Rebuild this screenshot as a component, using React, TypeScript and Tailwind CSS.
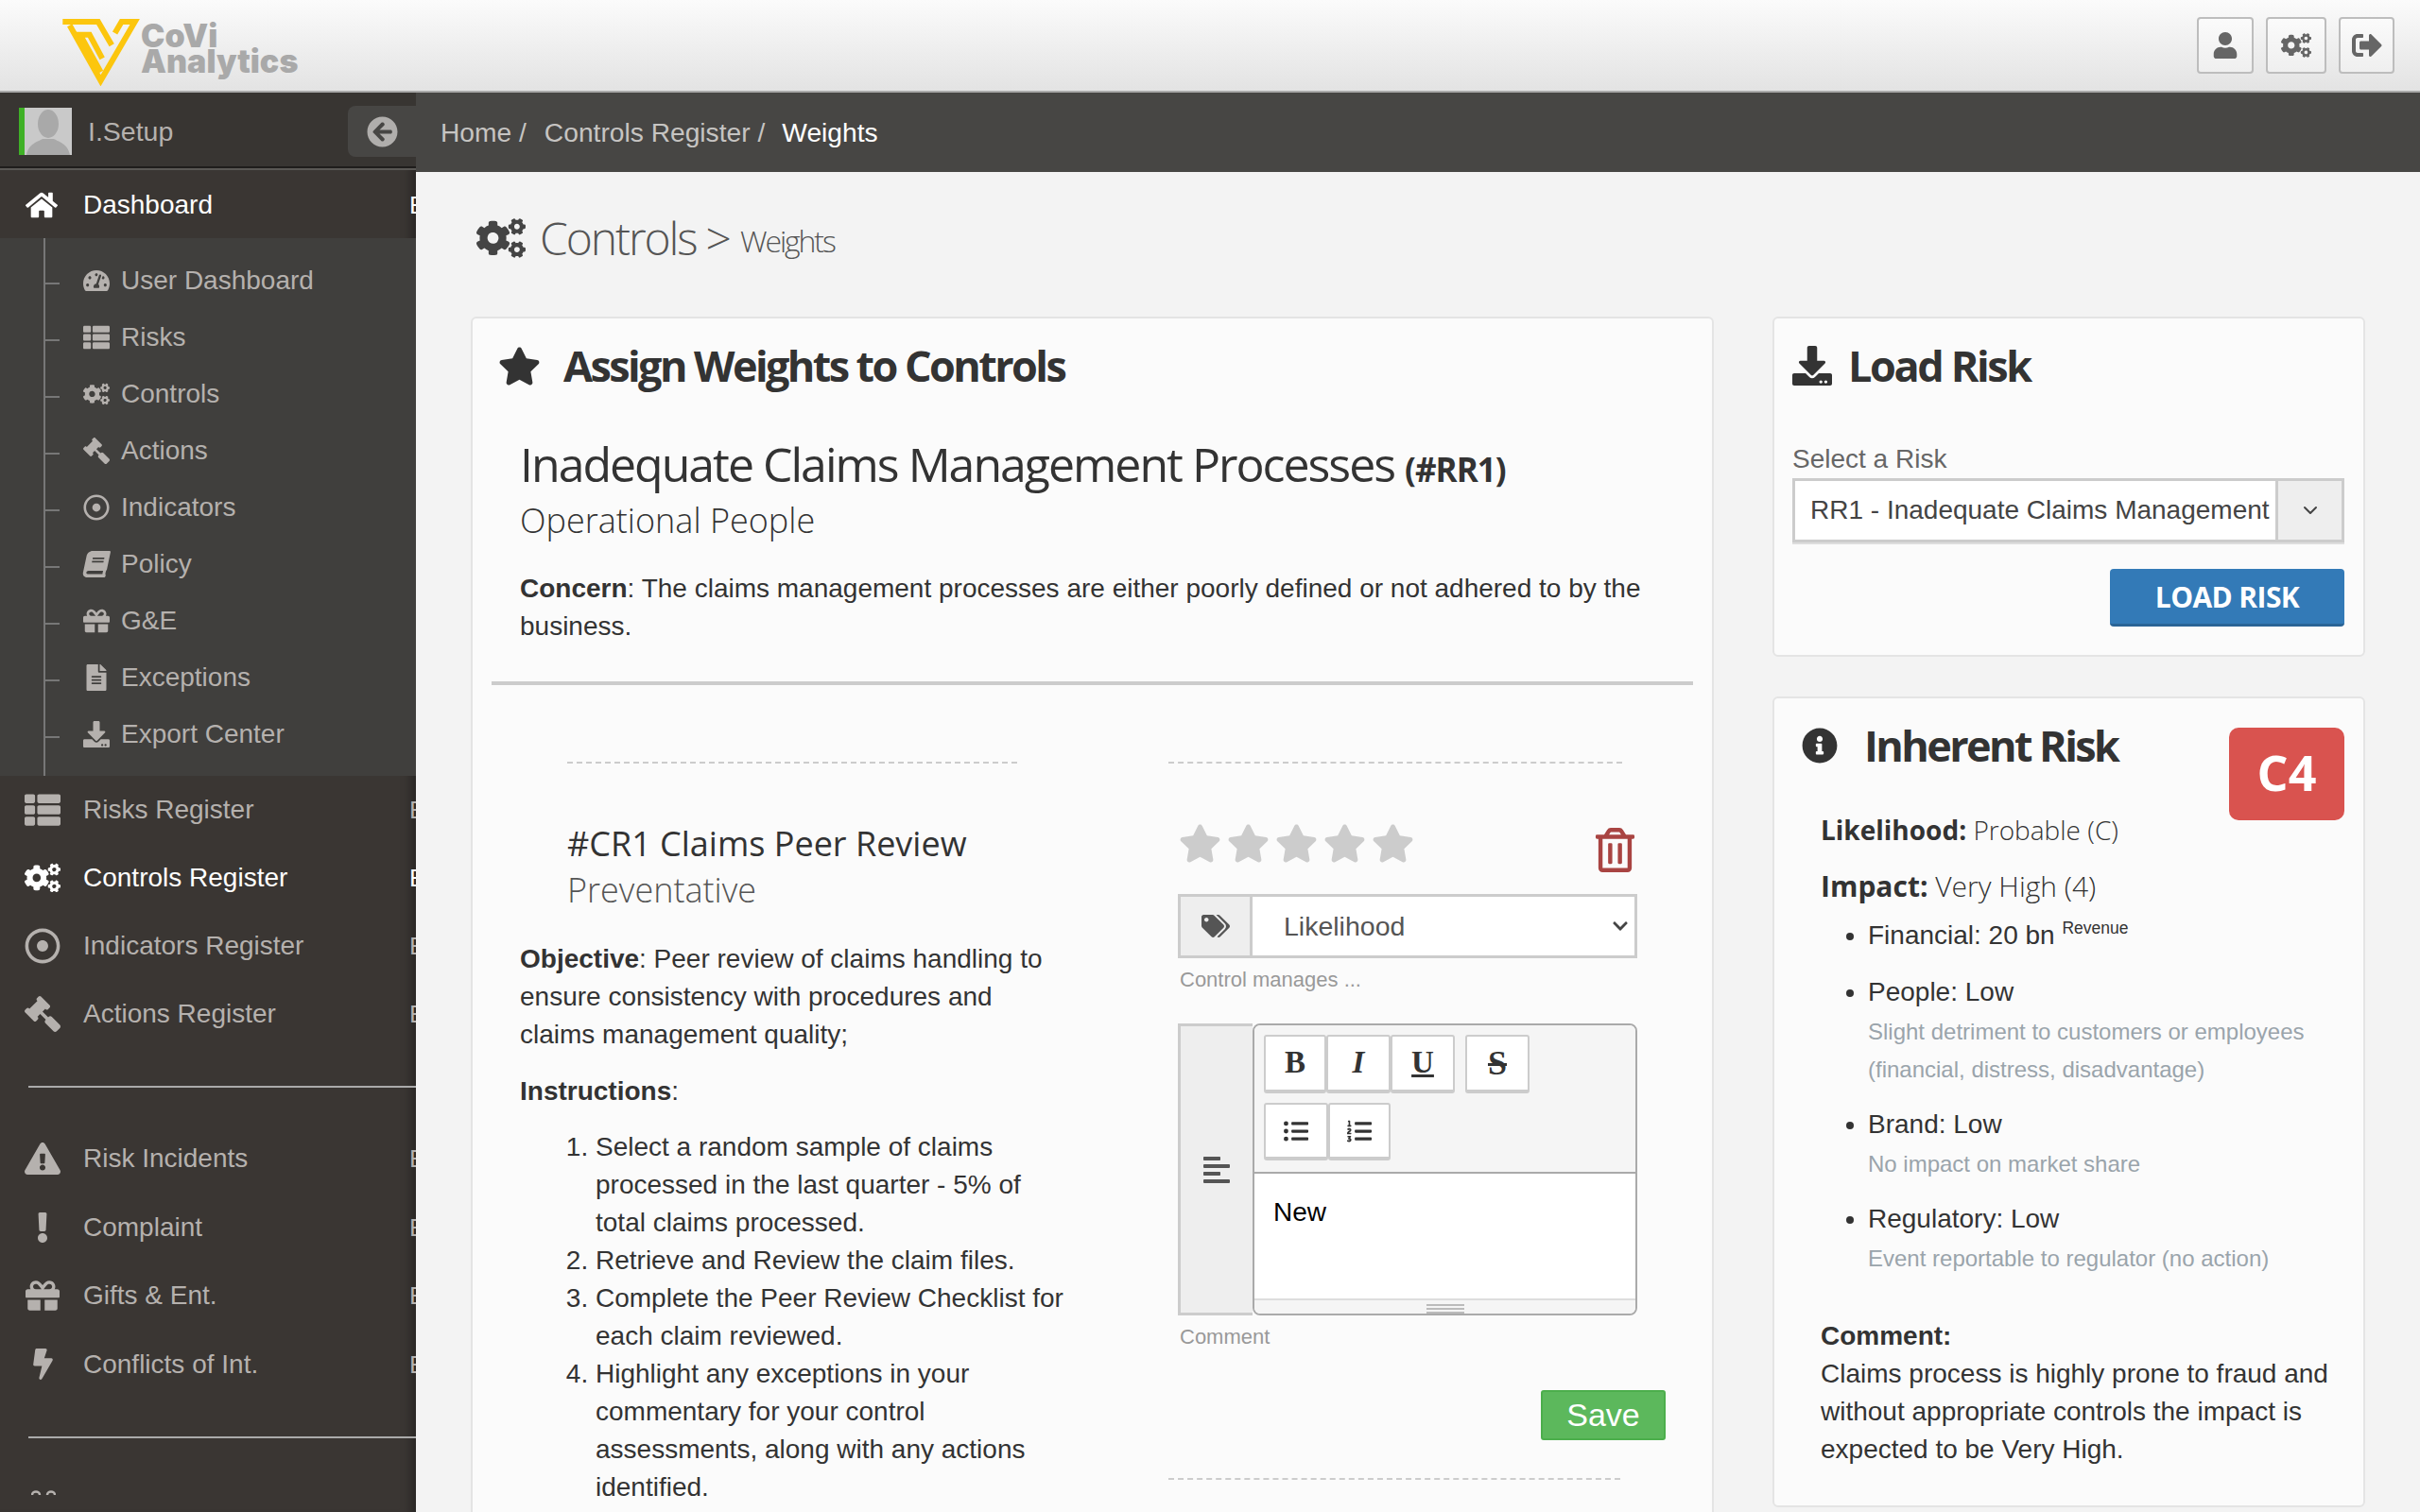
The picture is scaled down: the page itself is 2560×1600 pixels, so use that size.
import React from "react";
import { ChevronDown } from "lucide-react";
import {
  FaAlignLeft,
  FaArrowCircleLeft,
  FaBolt,
  FaBook,
  FaChevronDown,
  FaCogs,
  FaDownload,
  FaExclamation,
  FaExclamationTriangle,
  FaFileAlt,
  FaGavel,
  FaGift,
  FaHome,
  FaInfoCircle,
  FaListOl,
  FaListUl,
  FaRegDotCircle,
  FaRegTrashAlt,
  FaSignOutAlt,
  FaStar,
  FaTachometerAlt,
  FaTags,
  FaThList,
  FaUser,
} from "react-icons/fa";

const subItems = [
  { label: "User Dashboard", icon: FaTachometerAlt },
  { label: "Risks", icon: FaThList },
  { label: "Controls", icon: FaCogs },
  { label: "Actions", icon: FaGavel, iconClass: "-scale-x-100" },
  { label: "Indicators", icon: FaRegDotCircle },
  { label: "Policy", icon: FaBook, iconClass: "-skew-x-12" },
  { label: "G&E", icon: FaGift },
  { label: "Exceptions", icon: FaFileAlt },
  { label: "Export Center", icon: FaDownload },
];

function NavRow({
  label,
  icon: Icon,
  active,
  tall,
  size = 38,
  iconClass = "",
}: {
  label: string;
  icon: any;
  active?: boolean;
  tall?: boolean;
  size?: number;
  iconClass?: string;
}) {
  return (
    <div className={`flex items-center ${tall ? "h-[72.5px]" : "h-[72px]"} ${active ? "text-white" : "text-[#b5b1ae]"}`}>
      <span className="w-[92px] flex justify-center shrink-0 pr-[2px] mr-[-4px]">
        <Icon size={size} className={iconClass} />
      </span>
      <span className="text-[28px]">{label}</span>
      <span className="ml-auto w-[7px] overflow-hidden text-[26px] leading-none">E</span>
    </div>
  );
}

function Logo() {
  return (
    <div className="flex items-start pl-[66px] pt-[14px]">
      <svg width="82" height="71" viewBox="0 0 243 212" fill="none" stroke="#fcc60e" strokeWidth="18">
        <path d="M0 9 H112 L155 83" />
        <path d="M165 45 L186 9 H228 L120 195 L22 20" />
        <path d="M125 125 L85 50 H55 L120 168" />
      </svg>
      <div className="ml-[1px] mt-[4px] text-[#a9a9a9] font-black text-[34px] leading-[27px] font-['Inter',sans-serif]">
        <div>CoVi</div>
        <div>Analytics</div>
      </div>
    </div>
  );
}

function TopButton({ width, children }: { width: string; children: React.ReactNode }) {
  return (
    <div className={`${width} h-[60px] flex items-center justify-center rounded-[4px] border-2 border-[#bdbdbd] bg-linear-to-b from-[#fbfbfb] to-[#efefef] text-[#666]`}>
      {children}
    </div>
  );
}

function Sidebar() {
  return (
    <aside className="w-[440px] shrink-0 bg-[#3a3633] shadow-[inset_-14px_0_12px_-10px_rgba(0,0,0,0.35)] overflow-hidden">
      <div className="h-[80px] bg-[#383532] border-b-2 border-[#1f1d1c] flex items-center pl-[20px] pt-[4px]">
        <div className="w-[56px] h-[50px] bg-[#c9c9c9] border-l-[6px] border-[#3fb126] overflow-hidden">
          <svg viewBox="0 0 50 50" className="w-full h-full" fill="#a9a9a9">
            <ellipse cx="25" cy="17" rx="11" ry="15" />
            <path d="M2 50 C4 38 14 36 19 33 H31 C36 36 46 38 48 50 Z" />
          </svg>
        </div>
        <span className="ml-[17px] text-[28.5px] text-[#b5b1ae]">I.Setup</span>
        <div className="ml-auto w-[72px] h-[54px] bg-[#474644] rounded-l-[8px] flex items-center justify-center text-[#b0aeac]">
          <FaArrowCircleLeft size={33} />
        </div>
      </div>
      <div className="h-[2px] bg-[#5a5855]" />
      <div className="flex items-center h-[72px] pt-[2px] text-white">
        <span className="w-[88px] flex justify-center shrink-0">
          <FaHome size={34} />
        </span>
        <span className="text-[28px]">Dashboard</span>
        <span className="ml-auto w-[7px] overflow-hidden text-[26px] leading-none">E</span>
      </div>
      <div className="bg-[#403f3d] h-[569px] pl-[46px]">
        <div className="border-l-2 border-[#777] h-full pt-[15px] text-[#b5b1ae]">
          {subItems.map((item) => (
            <div key={item.label} className="flex items-center h-[60px]">
              <span className="w-[15px] h-[2px] bg-[#777] mt-[6px] shrink-0" />
              <span className="w-[28px] ml-[25px] flex justify-center shrink-0">
                <item.icon size={28} className={item.iconClass} />
              </span>
              <span className="ml-[12px] text-[28px]">{item.label}</span>
            </div>
          ))}
        </div>
      </div>
      <NavRow label="Risks Register" icon={FaThList} />
      <NavRow label="Controls Register" icon={FaCogs} active />
      <NavRow label="Indicators Register" icon={FaRegDotCircle} />
      <NavRow label="Actions Register" icon={FaGavel} iconClass="-scale-x-100" />
      <div className="h-[2px] bg-[#aaa] ml-[30px] mt-[40px] mb-[39px]" />
      <NavRow label="Risk Incidents" icon={FaExclamationTriangle} tall />
      <NavRow label="Complaint" icon={FaExclamation} size={32} tall />
      <NavRow label="Gifts & Ent." icon={FaGift} size={36} tall />
      <NavRow label="Conflicts of Int." icon={FaBolt} size={33} tall />
      <div className="h-[2px] bg-[#aaa] ml-[30px] mt-[40px]" />
      <svg width="26" height="5" viewBox="0 0 26 5" fill="none" stroke="#b5b1ae" strokeWidth="2.5" className="ml-[33px] mt-[55px]">
        <path d="M1 5 A4 3.5 0 0 1 9 5" />
        <path d="M17 5 A4 3.5 0 0 1 25 5" />
      </svg>
    </aside>
  );
}

function ToolButton({ className, children }: { className: string; children: React.ReactNode }) {
  return (
    <div className={`${className} flex items-center justify-center bg-white border-2 border-[#ccc] border-b-[4px] rounded-[3px] text-[#333]`}>
      {children}
    </div>
  );
}

function ControlForm() {
  return (
    <div className="w-[526px] text-[#333]">
      <div className="w-[480px] border-t-2 border-dashed border-[#ccc]" />
      <div className="mt-[62px] ml-[11px] w-[485px] h-[54px] flex items-start justify-between">
        <div className="flex gap-[6px] text-[#cccccc]">
          {[0, 1, 2, 3, 4].map((i) => (
            <FaStar key={i} size={45} />
          ))}
        </div>
        <FaRegTrashAlt size={47} className="text-[#a94442] mt-[6px]" />
      </div>
      <div className="mt-[22px] ml-[10px] w-[486px] h-[68px] flex border-[3px] border-[#ccc]">
        <div className="w-[76px] shrink-0 bg-[#eee] border-r-[3px] border-[#ccc] flex items-center justify-center text-[#555]">
          <FaTags size={30} />
        </div>
        <div className="relative flex-1">
          <select defaultValue="Likelihood" className="appearance-none w-full h-full bg-white text-[28.5px] text-[#555] pl-[33px] outline-none">
            <option>Likelihood</option>
          </select>
          <FaChevronDown size={18} className="absolute right-[6px] top-[22px] text-[#444] pointer-events-none" />
        </div>
      </div>
      <div className="mt-[8px] ml-[12px] h-[30px] leading-[30px] text-[22px] text-[#999]">Control manages ...</div>
      <div className="mt-[31px] ml-[10px] w-[486px] h-[309px] flex">
        <div className="w-[79px] shrink-0 bg-[#eee] border-[3px] border-r-0 border-[#ccc] flex items-center justify-center text-[#555]">
          <FaAlignLeft size={32} />
        </div>
        <div className="flex-1 border-[2px] border-[#aaa] rounded-[8px] overflow-hidden flex flex-col bg-white">
          <div className="h-[157px] bg-[#f5f5f5] border-b-2 border-[#aaa] pt-[10px] pl-[10px] font-['Liberation_Serif',serif] text-[33px] font-bold">
            <div className="flex h-[62px]">
              <ToolButton className="w-[66px] h-[62px]">B</ToolButton>
              <ToolButton className="w-[68px] h-[62px] italic">I</ToolButton>
              <ToolButton className="w-[68px] h-[62px] underline">U</ToolButton>
              <ToolButton className="w-[68px] h-[62px] ml-[11px] line-through text-[36px]">S</ToolButton>
            </div>
            <div className="flex h-[61px] mt-[10px]">
              <ToolButton className="w-[68px] h-[61px]"><FaListUl size={26} /></ToolButton>
              <ToolButton className="w-[66px] h-[61px]"><FaListOl size={26} /></ToolButton>
            </div>
          </div>
          <div className="flex-1 pl-[20px] pt-[21px] text-[28px] text-black leading-[40px]">New</div>
          <div className="h-[16px] bg-[#f5f5f5] border-t-2 border-[#ddd] flex flex-col items-center justify-end gap-[2px]">
            <div className="w-[40px] h-[2px] bg-[#bbb]" />
            <div className="w-[40px] h-[2px] bg-[#bbb]" />
            <div className="w-[40px] h-[2px] bg-[#bbb]" />
          </div>
        </div>
      </div>
      <div className="mt-[8px] ml-[12px] h-[30px] leading-[30px] text-[22px] text-[#999]">Comment</div>
      <div className="mt-[41px] ml-[394px] w-[132px] h-[53px] bg-[#5cb85c] border-2 border-[#4cae4c] rounded-[3px] text-white text-[34px] flex items-center justify-center">
        Save
      </div>
      <div className="mt-[40px] w-[478px] border-t-2 border-dashed border-[#ccc]" />
    </div>
  );
}

function InstructionsColumn() {
  return (
    <div className="w-[585px] ml-[50px] text-[#333] text-[28px] leading-[40px]">
      <div className="ml-[50px] w-[476px] border-t-2 border-dashed border-[#ccc]" />
      <h3 className="mt-[60px] ml-[50px] text-[36px] leading-[50px] font-['Open_Sans',sans-serif]">#CR1 Claims Peer Review</h3>
      <div className="ml-[50px] mt-[1px] text-[36px] leading-[46px] font-light text-[#555] font-['Open_Sans',sans-serif]">Preventative</div>
      <p className="mt-[30px]">
        <b>Objective</b>: Peer review of claims handling to ensure consistency with procedures and claims management quality;
      </p>
      <p className="mt-[20px]">
        <b>Instructions</b>:
      </p>
      <ol className="mt-[19px] pl-[80px] list-decimal">
        <li>Select a random sample of claims processed in the last quarter - 5% of total claims processed.</li>
        <li>Retrieve and Review the claim files.</li>
        <li>Complete the Peer Review Checklist for each claim reviewed.</li>
        <li>Highlight any exceptions in your commentary for your control assessments, along with any actions identified.</li>
      </ol>
    </div>
  );
}

function MainCard() {
  return (
    <section className="w-[1315px] h-[1400px] shrink-0 bg-[#fbfbfb] border-2 border-[#e4e4e4] rounded-[6px]">
      <div className="h-[100px] flex items-center pl-[27px]">
        <FaStar size={45} className="text-[#333]" />
        <h2 className="ml-[24px] text-[45px] font-bold tracking-[-2.6px] text-[#333] font-['Open_Sans',sans-serif]">Assign Weights to Controls</h2>
      </div>
      <div className="mt-[21px] pl-[50px] pr-[70px] font-['Open_Sans',sans-serif] text-[#333]">
        <h1 className="text-[50px] leading-[66px] tracking-[-2px]">
          Inadequate Claims Management Processes <b className="text-[35px] tracking-[-1px]">(#RR1)</b>
        </h1>
        <div className="text-[36px] leading-[41px] font-light">Operational People</div>
      </div>
      <p className="mt-[32px] ml-[50px] w-[1200px] text-[28px] leading-[40px] text-[#333]">
        <b>Concern</b>: The claims management processes are either poorly defined or not adhered to by the business.
      </p>
      <div className="mt-[38px] mx-[20px] h-[4px] bg-[#ccc]" />
      <div className="mt-[81px] flex">
        <InstructionsColumn />
        <div className="w-[101px] shrink-0" />
        <ControlForm />
      </div>
    </section>
  );
}

function LoadRiskCard() {
  return (
    <section className="h-[360px] bg-[#fbfbfb] border-2 border-[#e4e4e4] rounded-[6px] pl-[19px]">
      <div className="h-[100px] flex items-center">
        <FaDownload size={42} className="text-[#333]" />
        <h2 className="ml-[17px] text-[45px] font-bold tracking-[-2.4px] text-[#333] font-['Open_Sans',sans-serif]">Load Risk</h2>
      </div>
      <div className="mt-[32px] h-[34px] leading-[34px] text-[28px] text-[#666]">Select a Risk</div>
      <div className="mt-[3px] w-[584px] h-[68px] flex border-[3px] border-[#ccc] bg-white shadow-[0_2px_0_#ddd]">
        <div className="flex-1 pl-[16px] flex items-center text-[28px] text-[#444] whitespace-nowrap overflow-hidden">RR1 - Inadequate Claims Management</div>
        <div className="w-[70px] shrink-0 bg-[#eee] border-l-[3px] border-[#ccc] flex items-center justify-center text-[#444]">
          <ChevronDown size={24} strokeWidth={2} />
        </div>
      </div>
      <div className="mt-[28px] ml-[336px] w-[248px] h-[61px] bg-[#337ab7] border-b-[3px] border-[#2a6496] rounded-[4px] flex items-center justify-center text-white text-[30px] font-bold tracking-[-0.6px] font-['Open_Sans',sans-serif]">
        LOAD RISK
      </div>
    </section>
  );
}

function InherentRiskCard() {
  return (
    <section className="relative h-[858px] mt-[42px] bg-[#fbfbfb] border-2 border-[#e4e4e4] rounded-[6px] text-[#333]">
      <div className="h-[100px] flex items-center pl-[29px]">
        <FaInfoCircle size={38} className="text-[#333]" />
        <h2 className="ml-[28px] text-[45px] font-bold tracking-[-2.6px] font-['Open_Sans',sans-serif]">Inherent Risk</h2>
      </div>
      <div className="absolute top-[31px] right-[20px] w-[122px] h-[98px] bg-[#d9534f] rounded-[10px] flex items-center justify-center text-white text-[52px] font-bold font-['Open_Sans',sans-serif] pb-[4px]">
        C4
      </div>
      <div className="pl-[49px] pr-[20px]">
        <div className="mt-[17px] h-[44px] leading-[44px] text-[28px] font-['Open_Sans',sans-serif]">
          <b>Likelihood:</b> <span className="font-light">Probable (C)</span>
        </div>
        <div className="mt-[16px] h-[44px] leading-[44px] text-[30px] font-['Open_Sans',sans-serif]">
          <b>Impact:</b> <span className="font-light">Very High (4)</span>
        </div>
        <ul className="mt-[10px] pl-[50px] list-disc text-[28px] leading-[40px]">
          <li>
            Financial: 20 bn <sup className="text-[17.5px] align-[2px] leading-none">Revenue</sup>
          </li>
          <li className="mt-[20px]">
            People: Low
            <div className="mt-[2px] text-[24px] text-[#9aa4ab]">Slight detriment to customers or employees (financial, distress, disadvantage)</div>
          </li>
          <li className="mt-[18px]">
            Brand: Low
            <div className="mt-[2px] text-[24px] text-[#9aa4ab]">No impact on market share</div>
          </li>
          <li className="mt-[18px]">
            Regulatory: Low
            <div className="mt-[2px] text-[24px] text-[#9aa4ab]">Event reportable to regulator (no action)</div>
          </li>
        </ul>
        <div className="mt-[42px] text-[28px] leading-[40px]">
          <b>Comment:</b>
          <div>Claims process is highly prone to fraud and without appropriate controls the impact is expected to be Very High.</div>
        </div>
      </div>
    </section>
  );
}

export default function App() {
  return (
    <div className="h-[1600px] w-[2560px] overflow-hidden flex flex-col font-['Liberation_Sans',Arial,sans-serif]">
      <header className="h-[98px] shrink-0 flex items-center justify-between pr-[27px] bg-linear-to-b from-[#fbfbfb] to-[#e3e3e3] border-b-2 border-[#aaa]">
        <Logo />
        <div className="flex gap-[13px]">
          <TopButton width="w-[60px]"><FaUser size={28} /></TopButton>
          <TopButton width="w-[64px]"><FaCogs size={32} /></TopButton>
          <TopButton width="w-[59px]"><FaSignOutAlt size={32} /></TopButton>
        </div>
      </header>
      <div className="flex-1 flex min-h-0">
        <Sidebar />
        <main className="flex-1 min-w-0 bg-[#f3f3f3] overflow-hidden">
          <nav className="h-[84px] bg-[#474644] flex items-center pl-[26px] text-[28.2px] text-[#c6c4c2]">
            <span>Home /</span>
            <span className="ml-[19px]">Controls Register /</span>
            <span className="ml-[18px] text-white">Weights</span>
          </nav>
          <div className="pl-[58px] pt-[40px]">
            <div className="h-[60px] flex items-center pl-[6px] text-[#555] font-['Open_Sans',sans-serif] font-light">
              <FaCogs size={52} className="text-[#444]" />
              <span className="ml-[15px] text-[48px] tracking-[-2.1px]">Controls</span>
              <span className="ml-[10px] text-[48px]">&gt;</span>
              <span className="ml-[9px] mt-[6px] text-[32px] tracking-[-2.1px]">Weights</span>
            </div>
            <div className="mt-[53px] flex gap-[62px]">
              <MainCard />
              <div className="w-[627px] shrink-0">
                <LoadRiskCard />
                <InherentRiskCard />
              </div>
            </div>
          </div>
        </main>
      </div>
    </div>
  );
}
